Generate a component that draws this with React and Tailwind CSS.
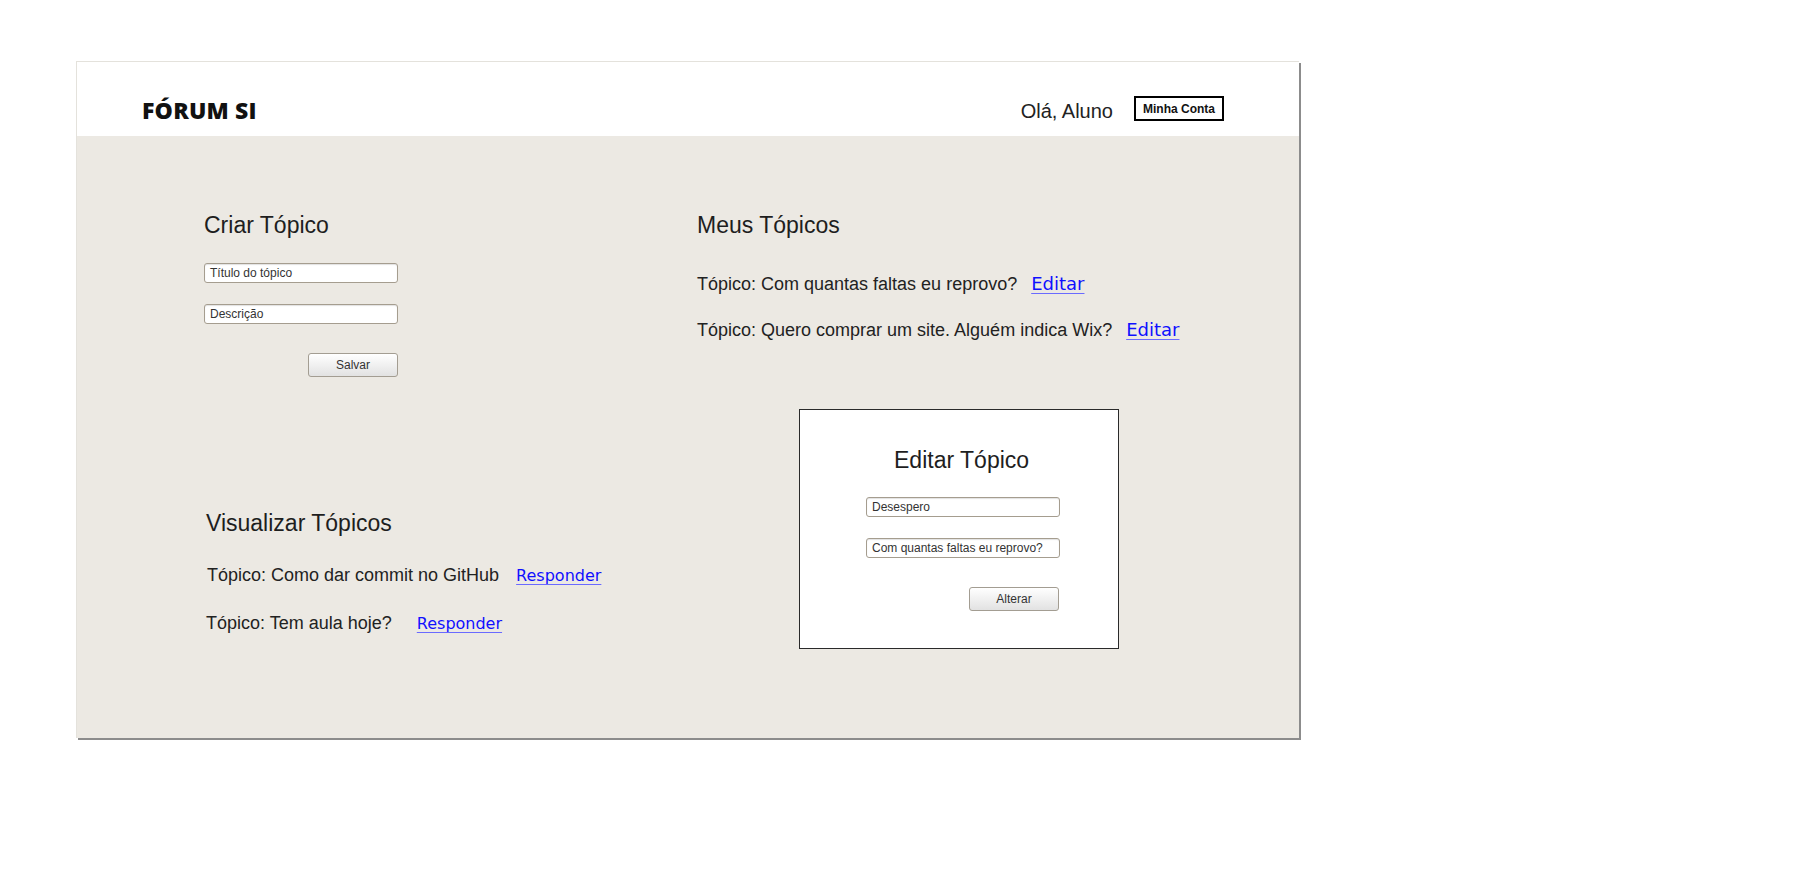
import React from 'react'

const sans = { fontFamily: '"Liberation Sans", Arial, sans-serif' }

function Field({ value }) {
  return (
    <div className="w-[194px] h-[20px] bg-white border border-[#a59d8f] rounded-[3px] pl-[5px] flex items-center text-[12px] text-[#333] leading-none shadow-[inset_0_1px_1px_rgba(0,0,0,0.12)]">
      {value}
    </div>
  )
}

function Button({ label }) {
  return (
    <div className="w-[90px] h-[24px] rounded-[3px] border border-[#a39d92] bg-gradient-to-b from-white to-[#e2e2e2] flex items-center justify-center text-[12px] text-[#333] leading-none">
      {label}
    </div>
  )
}

function Link({ children, className }) {
  return (
    <span
      className={`text-[#1010ff] underline decoration-[#6a6aff] underline-offset-[3px] leading-none ${className}`}
      style={{ fontFamily: '"DejaVu Sans", sans-serif' }}
    >
      {children}
    </span>
  )
}

export default function App() {
  return (
    <div className="min-h-screen bg-white pt-[61px] pl-[76px]" style={sans}>
      <div className="w-[1223px] h-[677px] flex flex-col border-t border-l border-[#e4e2dc] shadow-[2px_2px_0_#8c8c8c]">
        {/* Header */}
        <header className="h-[74px] bg-white flex justify-between pl-[65px] pr-[75px] shrink-0">
          <div
            className="mt-[37px] text-[23px] font-extrabold leading-none text-[#111] tracking-[0.2px]"
            style={{ fontFamily: '"Open Sans", sans-serif' }}
          >
            FÓRUM SI
          </div>
          <div className="flex items-start">
            <span className="mt-[39px] text-[20px] leading-none text-[#222]">Olá, Aluno</span>
            <div className="mt-[34px] ml-[21px] w-[90px] h-[25px] border-2 border-black flex items-center justify-center text-[12px] font-bold leading-none text-[#111]">
              Minha Conta
            </div>
          </div>
        </header>

        {/* Body */}
        <main className="flex-1 bg-[#ece9e3] flex pl-[127px] pt-[78px]">
          {/* Left column */}
          <section className="w-[494px] flex flex-col">
            <h2 className="text-[23px] leading-none text-[#1e1e1e]">Criar Tópico</h2>
            <div className="mt-[26px]">
              <Field value="Título do tópico" />
            </div>
            <div className="mt-[21px]">
              <Field value="Descrição" />
            </div>
            <div className="mt-[29px] w-[194px] flex justify-end">
              <Button label="Salvar" />
            </div>

            <h2 className="mt-[135px] ml-[2px] text-[23px] leading-none text-[#1e1e1e]">Visualizar Tópicos</h2>
            <div className="mt-[31px] ml-[3px] flex items-baseline text-[18px] leading-none text-[#222]">
              <span>Tópico: Como dar commit no GitHub</span>
              <Link className="ml-[17px] text-[16px]">Responder</Link>
            </div>
            <div className="mt-[30px] ml-[2px] flex items-baseline text-[18px] leading-none text-[#222]">
              <span>Tópico: Tem aula hoje?</span>
              <Link className="ml-[25px] text-[16px]">Responder</Link>
            </div>
          </section>

          {/* Right column */}
          <section className="flex flex-col">
            <h2 className="-ml-[1px] text-[23px] leading-none text-[#1e1e1e]">Meus Tópicos</h2>
            <div className="mt-[38px] -ml-[1px] flex items-baseline text-[18px] leading-none text-[#222]">
              <span>Tópico: Com quantas faltas eu reprovo?</span>
              <Link className="ml-[14px] text-[18px]">Editar</Link>
            </div>
            <div className="mt-[28px] -ml-[1px] flex items-baseline text-[18px] leading-none text-[#222]">
              <span>Tópico: Quero comprar um site. Alguém indica Wix?</span>
              <Link className="ml-[14px] text-[18px]">Editar</Link>
            </div>

            {/* Edit dialog */}
            <div className="mt-[70px] ml-[101px] w-[320px] h-[240px] bg-white border border-[#2a2a2a] flex flex-col items-start pt-[39px] pl-[66px]">
              <h3 className="ml-[28px] text-[23px] leading-none text-[#1e1e1e]">Editar Tópico</h3>
              <div className="mt-[25px]">
                <Field value="Desespero" />
              </div>
              <div className="mt-[21px]">
                <Field value="Com quantas faltas eu reprovo?" />
              </div>
              <div className="mt-[29px] w-[193px] flex justify-end">
                <Button label="Alterar" />
              </div>
            </div>
          </section>
        </main>
      </div>
    </div>
  )
}
